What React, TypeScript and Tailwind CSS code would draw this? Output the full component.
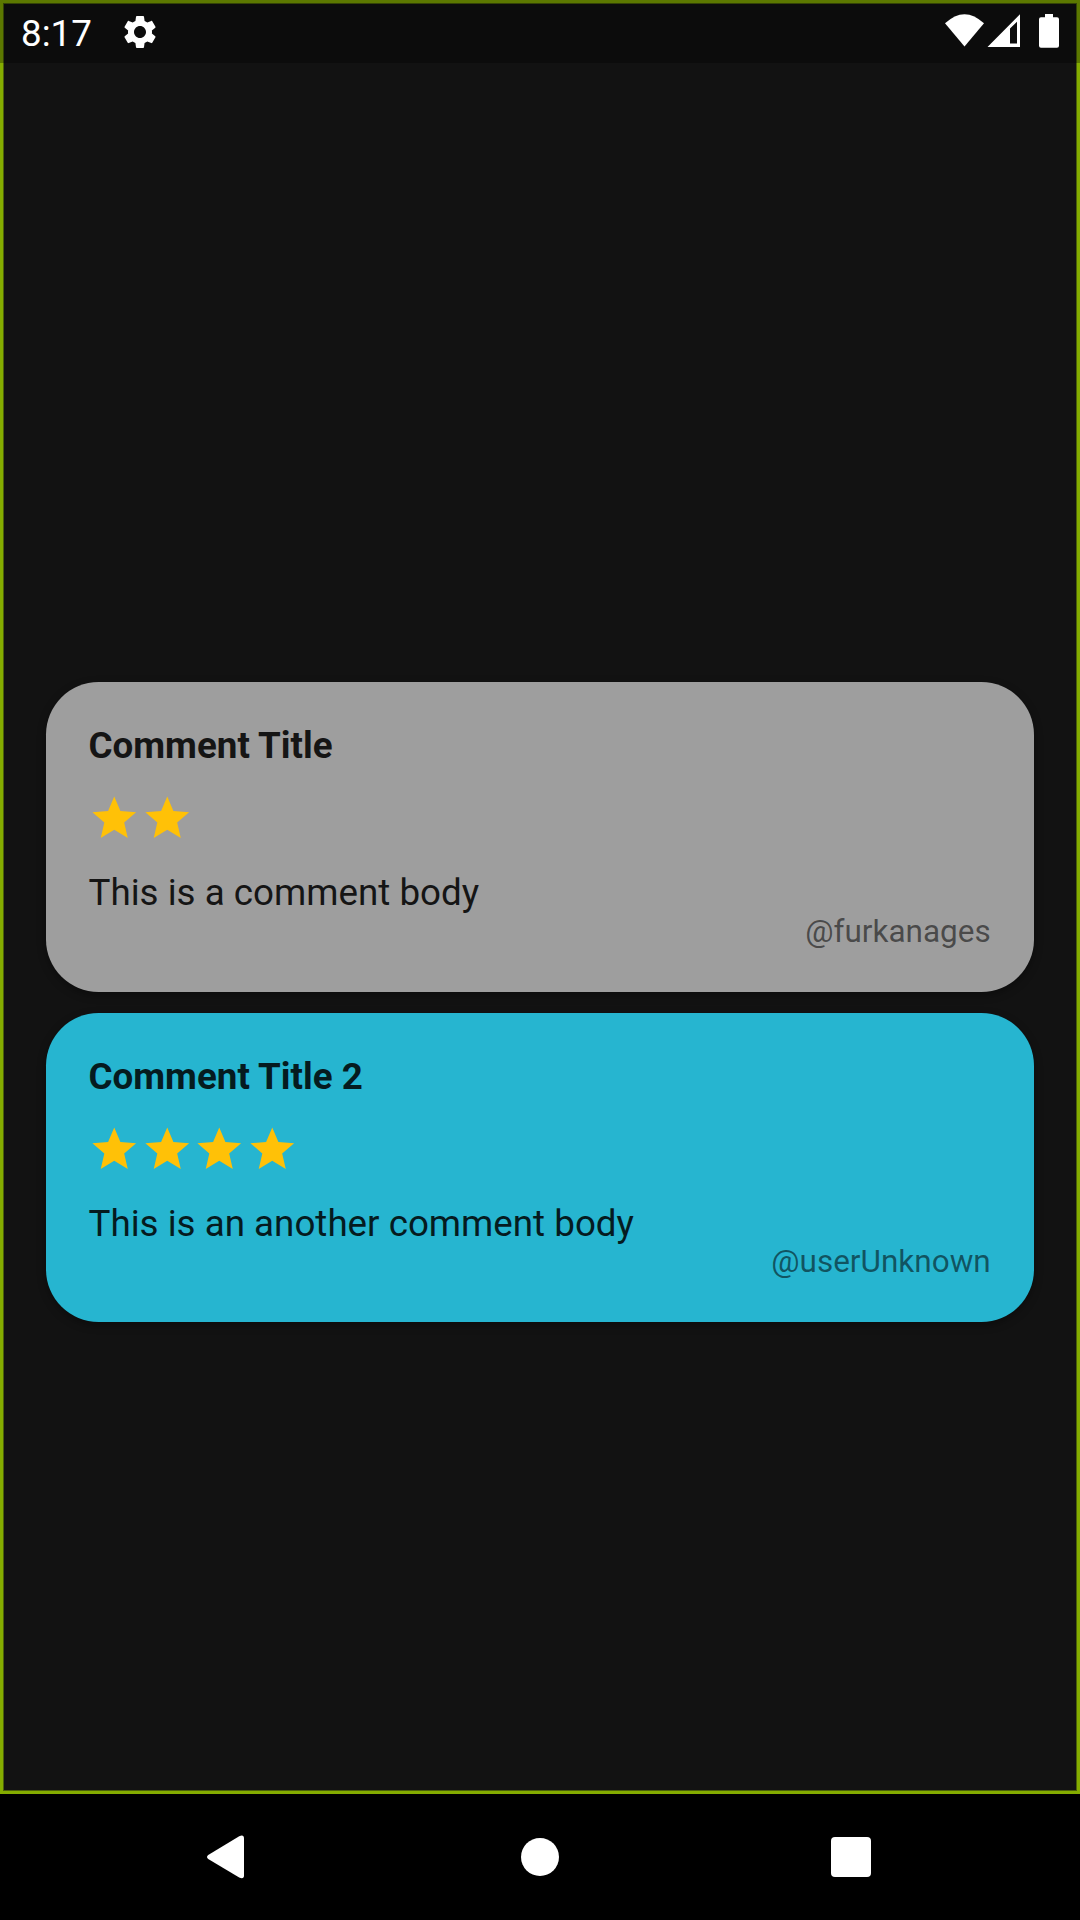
import React from "react";

type Comment = { title: string; stars: number; body: string; user: string; tone: string };

const comments: Comment[] = [
  {
    title: "Comment Title",
    stars: 2,
    body: "This is a comment body",
    user: "@furkanages",
    tone: "bg-[#9e9e9e] text-[#151515]",
  },
  {
    title: "Comment Title 2",
    stars: 4,
    body: "This is an another comment body",
    user: "@userUnknown",
    tone: "bg-[#26b5d0] text-[#051b1f]",
  },
];

function Star() {
  return (
    <svg viewBox="0 0 24 24" className="size-[52.5px] shrink-0 fill-[#ffc107]">
      <path d="M12 17.27 18.18 21l-1.64-7.03L22 9.24l-7.19-.61L12 2 9.19 8.63 2 9.24l5.46 4.73L5.82 21z" />
    </svg>
  );
}

function CommentCard({ title, stars, body, user, tone }: Comment) {
  return (
    <article
      className={`flex h-[309.5px] flex-col rounded-[52.5px] pt-[42px] pr-[43px] pl-[42.25px] shadow-[0_3px_8px_rgba(0,0,0,0.35)] ${tone}`}
    >
      <h2 className="h-[43px] text-[36.75px] leading-[43px] font-bold">{title}</h2>
      <div className="mt-[25.2px] -ml-[0.25px] flex">
        {Array.from({ length: stars }, (_, i) => (
          <Star key={i} />
        ))}
      </div>
      <p className="mt-[26.4px] h-[41.8px] text-[36.75px] leading-[43px]">{body}</p>
      <p className="h-[37px] text-right text-[31.5px] leading-[37px] text-black/54">{user}</p>
    </article>
  );
}

function StatusBar() {
  return (
    <header className="absolute inset-x-0 top-0 flex h-[63px] items-center bg-black/30 text-white">
      <span className="mt-[4px] ml-[21px] text-[36.75px] leading-[63px]">8:17</span>
      <svg viewBox="0 0 24 24" className="ml-[28px] size-[40px] fill-white">
        <path d="M19.14 12.94c.04-.3.06-.61.06-.94 0-.32-.02-.64-.07-.94l2.03-1.58c.18-.14.23-.41.12-.61l-1.92-3.32c-.12-.22-.37-.29-.59-.22l-2.39.96c-.5-.38-1.03-.7-1.62-.94l-.36-2.54c-.04-.24-.24-.41-.48-.41h-3.84c-.24 0-.43.17-.47.41l-.36 2.54c-.59.24-1.13.57-1.62.94l-2.39-.96c-.22-.08-.47 0-.59.22L2.74 8.87c-.12.21-.08.47.12.61l2.03 1.58c-.05.3-.09.63-.09.94s.02.64.07.94l-2.03 1.58c-.18.14-.23.41-.12.61l1.92 3.32c.12.22.37.29.59.22l2.39-.96c.5.38 1.03.7 1.62.94l.36 2.54c.05.24.24.41.48.41h3.84c.24 0 .44-.17.47-.41l.36-2.54c.59-.24 1.13-.56 1.62-.94l2.39.96c.22.08.47 0 .59-.22l1.92-3.32c.12-.22.07-.47-.12-.61zM12 15.6c-1.98 0-3.6-1.62-3.6-3.6s1.62-3.6 3.6-3.6 3.6 1.62 3.6 3.6-1.62 3.6-3.6 3.6" />
      </svg>
      <svg viewBox="940 10 124 43" className="mr-[16px] ml-auto h-[43px] w-[124px] fill-white">
        <path d="M945 23.3Q964.5 5 984 23.3L964.5 46.5z" />
        <path fillRule="evenodd" d="M1020 14.3V47H987.5zM1010 28.5V43.6H1017V21.8z" />
        <path d="M1045 14h8v3.3h4q2 0 2 2v26.500q0 2-2 2h-16q-2 0-2-2V19.300q0-2 2-2h4z" />
      </svg>
    </header>
  );
}

function NavigationBar() {
  return (
    <nav className="grid h-[126px] grid-cols-[450px_180px_450px] items-center bg-black">
      <svg viewBox="0 0 38 44" className="ml-[206px] h-[44px] w-[38px] fill-white">
        <path d="M2.200 20.100 33.200 1.200Q38 -1 38 3.500V40.500Q38 44.500 33.200 42.600L2.200 24Q-.2 22 2.200 20.100z" />
      </svg>
      <div className="size-[38.500px] justify-self-center rounded-full bg-white" />
      <div className="ml-[201px] size-[40px] rounded-[4px] bg-white" />
    </nav>
  );
}

export default function App() {
  return (
    <div className="flex h-[1920px] w-[1080px] flex-col overflow-hidden bg-black font-['Roboto',sans-serif]">
      <main className="relative flex h-[1794px] flex-col border-[3px] border-[#84ac00] bg-[#121212] shadow-[inset_0_0_0_1px_#4b600a]">
        <section className="mt-[679px] flex flex-col gap-[21px] px-[43.250px]">
          {comments.map((comment) => (
            <CommentCard key={comment.title} {...comment} />
          ))}
        </section>
        <div className="absolute -inset-x-[3px] -top-[3px]">
          <StatusBar />
        </div>
      </main>
      <NavigationBar />
    </div>
  );
}
